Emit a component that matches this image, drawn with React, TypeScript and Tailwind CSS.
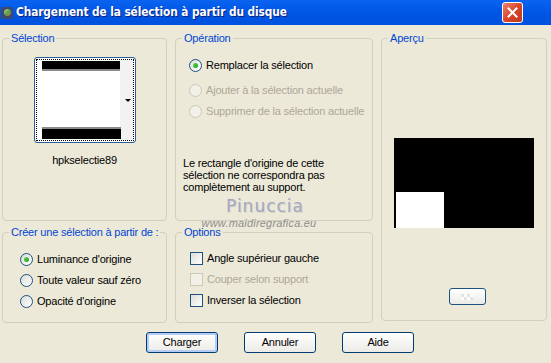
import React from "react";

const font = { fontFamily: '"Liberation Sans", Arial, sans-serif' };

function Radio({ checked, disabled }: { checked?: boolean; disabled?: boolean }) {
  return (
    <span
      className={
        "relative inline-flex h-[13px] w-[13px] shrink-0 items-center justify-center rounded-full border " +
        (disabled
          ? "border-[#CAC8BB] bg-[#F3F1E7]"
          : "border-[#1C5180] bg-gradient-to-br from-[#DCDCD7] to-white")
      }
    >
      {checked && <span className="h-[5px] w-[5px] rounded-full bg-gradient-to-br from-[#55D751] to-[#21A121]" />}
    </span>
  );
}

function Check({ disabled }: { disabled?: boolean }) {
  return (
    <span
      className={
        "inline-block h-[13px] w-[13px] shrink-0 border " +
        (disabled
          ? "border-[#CAC8BB] bg-[#F3F1E7]"
          : "border-[#1C5180] bg-gradient-to-br from-[#DCDCD7] to-white")
      }
    />
  );
}

function Group({ title, className, children }: { title: string; className: string; children?: React.ReactNode }) {
  return (
    <fieldset className={"rounded-[4px] border border-[#D0D0BF] " + className}>
      <legend className="ml-[6px] whitespace-nowrap px-[2px] text-[11px] leading-[13px] text-[#0046D5]">{title}</legend>
      {children}
    </fieldset>
  );
}

function Btn({ label, focus }: { label: string; focus?: boolean }) {
  return (
    <button
      className={
        "h-[21px] w-[72px] rounded-[3px] border border-[#003C74] bg-gradient-to-b from-white to-[#ECEBE6] text-[11px] text-black " +
        (focus ? "shadow-[inset_0_0_0_2px_#B5CCF7]" : "")
      }
    >
      {label}
    </button>
  );
}

export default function App() {
  return (
    <div className="relative h-[363px] w-[551px] overflow-hidden bg-[#ECE9D8] tracking-[-0.2px]" style={font}>
      {/* title bar */}
      <div className="flex h-[25px] items-center bg-gradient-to-b from-[#0A64F0] via-[#0055E5] to-[#0052DE] pr-[28px]">
        <span className="ml-[1px] mr-[3px] flex h-[12px] w-[12px] items-center justify-center rounded-[2px] bg-[#3B4A6E]">
          <span className="h-[7px] w-[7px] rounded-full bg-gradient-to-br from-[#E8C34A] via-[#3CAA5A] to-[#C2402F]" />
        </span>
        <span className="text-[11.8px] font-bold tracking-[-0.1px] text-white [text-shadow:1px_1px_0_#0A1E7A]" style={{ fontFamily: '"DejaVu Sans Condensed", "Liberation Sans", sans-serif' }}>
          Chargement de la sélection à partir du disque
        </span>
        <span className="ml-auto flex h-[21px] w-[21px] items-center justify-center rounded-[3px] border border-white bg-gradient-to-br from-[#E9856A] via-[#D8452A] to-[#C23A1E]">
          <svg width="11" height="11" viewBox="0 0 11 11">
            <path d="M1.5 1.5 L9.5 9.5 M9.5 1.5 L1.5 9.5" stroke="white" strokeWidth="2" strokeLinecap="square" />
          </svg>
        </span>
      </div>

      <div className="px-[2px] pt-[7px]">
        <div className="grid grid-cols-[165px_198px_166px] gap-x-[8px]">
          <div className="flex flex-col gap-[5px]">
            <Group title="Sélection" className="h-[189px]">
              <div className="flex flex-col items-center pt-[12px]">
                <div className="h-[86px] w-[102px] rounded-[3px] border border-[#2C5C94] bg-white p-[1px]">
                  <div className="relative h-full w-full border border-dotted border-black">
                    <div className="absolute bottom-0 right-0 top-0 w-[13px] bg-[#F2F2F2]" />
                    <div className="ml-[5px] mt-[1px] h-[10px] w-[79px] border-b-2 border-[#8A8A8A] bg-black" />
                    <div className="absolute bottom-[1px] left-[5px] h-[12px] w-[79px] border-t-2 border-[#8A8A8A] bg-black" />
                    <div className="absolute right-[2px] top-[39px] h-0 w-0 border-x-[3px] border-t-[3px] border-x-transparent border-t-black" />
                  </div>
                </div>
                <div className="mt-[11px] text-[11px] leading-[13px] text-black">hpkselectie89</div>
              </div>
            </Group>
            <Group title="Créer une sélection à partir de :" className="h-[97px]">
              <div className="flex flex-col gap-[8px] pl-[17px] pt-[14px] text-[11px] leading-[13px]">
                <div className="flex items-center gap-[4px]"><Radio checked />Luminance d'origine</div>
                <div className="flex items-center gap-[4px]"><Radio />Toute valeur sauf zéro</div>
                <div className="flex items-center gap-[4px]"><Radio />Opacité d'origine</div>
              </div>
            </Group>
          </div>

          <div className="flex flex-col gap-[5px]">
            <Group title="Opération" className="h-[189px]">
              <div className="flex flex-col pl-[13px] pt-[14px] text-[11px] leading-[13px]">
                <div className="flex items-center gap-[4px]"><Radio checked />Remplacer la sélection</div>
                <div className="mt-[12px] flex items-center gap-[4px] text-[#ACA899]"><Radio disabled />Ajouter à la sélection actuelle</div>
                <div className="mt-[8px] flex items-center gap-[4px] text-[#ACA899]"><Radio disabled />Supprimer de la sélection actuelle</div>
              </div>
              <p className="pl-[7px] pt-[39px] text-[11px] leading-[12px] text-black">
                Le rectangle d'origine de cette
                <br />
                sélection ne correspondra pas
                <br />
                complètement au support.
              </p>
            </Group>
            <Group title="Options" className="h-[97px]">
              <div className="flex flex-col gap-[8px] pl-[14px] pt-[13px] text-[11px] leading-[13px]">
                <div className="flex items-center gap-[4px]"><Check />Angle supérieur gauche</div>
                <div className="flex items-center gap-[4px] text-[#ACA899]"><Check disabled />Couper selon support</div>
                <div className="flex items-center gap-[4px]"><Check />Inverser la sélection</div>
              </div>
            </Group>
          </div>

          <Group title="Aperçu" className="h-[289px]">
            <div className="flex flex-col items-center">
              <div className="mt-[93px] flex h-[90px] w-[140px] items-end bg-black pl-[2px]">
                <div className="h-[36px] w-[48px] bg-white" />
              </div>
              <div className="ml-[6px] mt-[60px] flex h-[17px] w-[37px] items-center justify-center rounded-[3px] border border-[#1C5180] bg-gradient-to-b from-white to-[#ECEBE6]">
                <div className="grid grid-cols-4">
                  <span className="h-[3px] w-[3px] bg-[#E4E4E4]" />
                  <span className="h-[3px] w-[3px] bg-white" />
                  <span className="h-[3px] w-[3px] bg-[#E4E4E4]" />
                  <span className="h-[3px] w-[3px] bg-white" />
                  <span className="h-[3px] w-[3px] bg-white" />
                  <span className="h-[3px] w-[3px] bg-[#E4E4E4]" />
                  <span className="h-[3px] w-[3px] bg-white" />
                  <span className="h-[3px] w-[3px] bg-[#E4E4E4]" />
                </div>
              </div>
            </div>
          </Group>
        </div>

        <div className="ml-[144px] mt-[9px] flex gap-[26px]">
          <Btn label="Charger" focus />
          <Btn label="Annuler" />
          <Btn label="Aide" />
        </div>
      </div>

      {/* watermark */}
      <div className="pointer-events-none absolute left-[196px] top-[198px] flex w-[126px] flex-col items-center">
        <span className="ml-[12px] text-[17px] leading-[17px] tracking-[1px] text-[#A3A8C2] [text-shadow:1px_1px_0_#D6D4C8]" style={{ fontFamily: '"DejaVu Sans", sans-serif' }}>
          Pinuccia
        </span>
        <span className="mt-[3px] text-[11px] italic leading-[11px] tracking-[0.2px] text-[#8E8E8E]" style={{ fontFamily: '"Liberation Sans", sans-serif' }}>
          www.maidiregrafica.eu
        </span>
      </div>
    </div>
  );
}
